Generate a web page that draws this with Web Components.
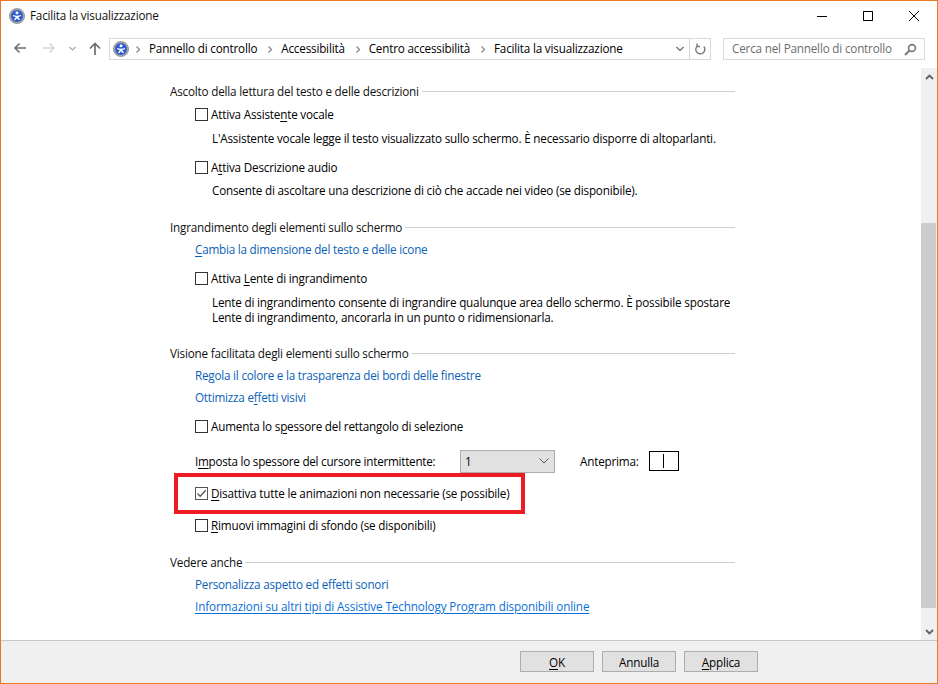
<!DOCTYPE html>
<html lang="it">
<head>
<meta charset="utf-8">
<title>Facilita la visualizzazione</title>
<style>
    html, body { margin: 0; padding: 0; background: #fff; }
    body {
        width: 938px;
        height: 684px;
        overflow: hidden;
        font: 11.7px/16px "Open Sans", "Noto Sans", sans-serif;
        letter-spacing: -0.19px;
        color: #000;
    }
    u { text-underline-offset: 2px; text-decoration-thickness: 1px; }
</style>
</head>
<body>

<cp-window>
    <cp-titlebar slot="title">Facilita la visualizzazione</cp-titlebar>
    <cp-navbar slot="nav">
        <cp-crumb>Pannello di controllo</cp-crumb>
        <cp-crumb>Accessibilità</cp-crumb>
        <cp-crumb>Centro accessibilità</cp-crumb>
        <cp-crumb>Facilita la visualizzazione</cp-crumb>
    </cp-navbar>

    <cp-heading>Ascolto della lettura del testo e delle descrizioni</cp-heading>
    <cp-check gap="7">Attiva Assiste<u>n</u>te vocale</cp-check>
    <cp-note gap="9">L'Assistente vocale legge il testo visualizzato sullo schermo. È necessario disporre di altoparlanti.</cp-note>
    <cp-check gap="13">A<u>t</u>tiva Descrizione audio</cp-check>
    <cp-note gap="8">Consente di ascoltare una descrizione di ciò che accade nei video (se disponibile).</cp-note>

    <cp-heading gap="21">Ingrandimento degli elementi sullo schermo</cp-heading>
    <cp-link gap="6"><u>C</u>ambia la dimensione del testo e delle icone</cp-link>
    <cp-check gap="13">Attiva <u>L</u>ente di ingrandimento</cp-check>
    <cp-note gap="9">Lente di ingrandimento consente di ingrandire qualunque area dello schermo. È possibile spostare<br>Lente di ingrandimento, ancorarla in un punto o ridimensionarla.</cp-note>

    <cp-heading gap="20">Visione facilitata degli elementi sullo schermo</cp-heading>
    <cp-link gap="6">Re<u>g</u>ola il colore e la trasparenza dei bordi delle finestre</cp-link>
    <cp-link gap="6">Ottimizza e<u>f</u>fetti visivi</cp-link>
    <cp-check gap="13">Aumenta lo s<u>p</u>essore del rettangolo di selezione</cp-check>
    <cp-cursor-row gap="19">I<u>m</u>posta lo spessore del cursore intermittente:</cp-cursor-row>
    <cp-check gap="16" checked><u>D</u>isattiva tutte le animazioni non necessarie (se possibile)</cp-check>
    <cp-check gap="16"><u>R</u>imuovi immagini di sfondo (se disponibili)</cp-check>

    <cp-heading gap="21">Vedere anche</cp-heading>
    <cp-link gap="6">Personalizza aspetto ed effetti sonori</cp-link>
    <cp-link gap="6" active>Informazioni su altri tipi di Assistive Technology Program disponibili online</cp-link>

    <cp-highlight slot="overlay"></cp-highlight>

    <cp-button slot="footer"><u>O</u>K</cp-button>
    <cp-button slot="footer">Annulla</cp-button>
    <cp-button slot="footer"><u>A</u>pplica</cp-button>
</cp-window>

<script>
const EASE_ICON = `
    <svg width="16" height="16" viewBox="0 0 16 16" aria-hidden="true">
        <circle cx="8" cy="8" r="7.6" fill="#a4a6ab"/>
        <circle cx="8" cy="8" r="7.6" fill="none" stroke="#77797e" stroke-width="0.6"/>
        <circle cx="8" cy="8" r="5.9" fill="#2c5ad0"/>
        <circle cx="8" cy="4.8" r="1.5" fill="#fff"/>
        <path d="M4 7Q8 8.500 12 7V8Q10 8.800 9.200 9L11 11.800 9.800 12.300 8 10.300 6.200 12.300 5 11.800 6.800 9Q6 8.800 4 8Z" fill="#fff"/>
    </svg>`;

// vertical gap above a row, in pixels, from the gap attribute
function gapOf(el) {
    return el.getAttribute('gap') || '0';
}

class CpWindow extends HTMLElement {
    constructor() {
        super();
        this.attachShadow({ mode: 'open' });
    }

    connectedCallback() {
        this.shadowRoot.innerHTML = `
            <style>
                :host {
                    display: flex;
                    flex-direction: column;
                    box-sizing: border-box;
                    width: 938px;
                    height: 684px;
                    position: relative;
                    background: #fff;
                    border: 1px solid #ec7526;
                }
                .main { flex: 1; display: flex; min-height: 0; }
                .content {
                    flex: 1;
                    padding: 15px 0 0 169px;
                    display: flex;
                    flex-direction: column;
                    align-items: flex-start;
                }
                .footer {
                    box-sizing: border-box;
                    height: 43px;
                    flex-shrink: 0;
                    background: #f0f0f0;
                    border-top: 1px solid #c8c8c8;
                    display: flex;
                    justify-content: flex-end;
                    gap: 8px;
                    padding: 10px 179px 0 0;
                }
            </style>
            <slot name="title"></slot>
            <slot name="nav"></slot>
            <div class="main">
                <div class="content"><slot></slot></div>
                <cp-scrollbar></cp-scrollbar>
            </div>
            <div class="footer"><slot name="footer"></slot></div>
            <slot name="overlay"></slot>
        `;
    }
}

class CpTitlebar extends HTMLElement {
    constructor() {
        super();
        this.attachShadow({ mode: 'open' });
    }

    connectedCallback() {
        this.shadowRoot.innerHTML = `
            <style>
                :host {
                    display: flex;
                    align-items: center;
                    height: 30px;
                    padding-left: 8px;
                    flex-shrink: 0;
                }
                svg { display: block; }
                .text { margin: 0 0 2px 5px; flex: 1; color: #111; }
                .ctl { width: 46px; height: 30px; display: flex; align-items: center; justify-content: center; }
                .ctl svg { margin-top: -1px; }
            </style>
            ${EASE_ICON}
            <span class="text"><slot></slot></span>
            <span class="ctl"><svg width="10" height="10"><path d="M0 5.500h10" stroke="#000"/></svg></span>
            <span class="ctl"><svg width="10" height="10"><rect x=".5" y=".5" width="9" height="9" fill="none" stroke="#000"/></svg></span>
            <span class="ctl"><svg width="10" height="10"><path d="M0 0l10 10M10 0L0 10" stroke="#000" stroke-width="1"/></svg></span>
        `;
    }
}

class CpNavbar extends HTMLElement {
    constructor() {
        super();
        this.attachShadow({ mode: 'open' });
    }

    connectedCallback() {
        this.shadowRoot.innerHTML = `
            <style>
                :host {
                    display: flex;
                    align-items: flex-start;
                    box-sizing: border-box;
                    height: 37px;
                    padding-top: 7px;
                    flex-shrink: 0;
                }
                svg { display: block; flex-shrink: 0; }
                .btns { width: 108px; height: 20px; display: flex; align-items: center; flex-shrink: 0; }
                .address {
                    box-sizing: border-box;
                    width: 602px;
                    height: 22px;
                    border: 1px solid #d9d9d9;
                    display: flex;
                    align-items: center;
                    padding-left: 3px;
                }
                .crumbs { flex: 1; display: flex; align-items: center; margin: 0 0 2px -4px; }
                .refresh {
                    width: 20px;
                    height: 20px;
                    border-left: 1px solid #d9d9d9;
                    display: flex;
                    align-items: center;
                    justify-content: center;
                }
                .drop { margin-right: 5px; }
                .search {
                    box-sizing: border-box;
                    width: 202px;
                    height: 22px;
                    margin-left: 12px;
                    border: 1px solid #d9d9d9;
                    display: flex;
                    align-items: center;
                    justify-content: space-between;
                    padding: 0 7px 0 8px;
                    color: #6d6d6d;
                }
                .search span { margin-bottom: 2px; }
            </style>
            <div class="btns">
                <svg width="14" height="12" style="margin-left:12px"><path d="M13 6H2M6.500 1.500 2 6l4.500 4.500" fill="none" stroke="#6f6f6f" stroke-width="1.600"/></svg>
                <svg width="14" height="12" style="margin-left:15px"><path d="M1 6h11M7.500 1.500 12 6l-4.500 4.500" fill="none" stroke="#d6d6d6" stroke-width="1.600"/></svg>
                <svg width="7" height="5" style="margin-left:13px"><path d="M.5 1 3.500 4l3-3" fill="none" stroke="#a8a8a8" stroke-width="1.200"/></svg>
                <svg width="12" height="13" style="margin-left:13px"><path d="M6 13V2M1 6.500 6 1.500l5 5" fill="none" stroke="#6f6f6f" stroke-width="1.700"/></svg>
            </div>
            <div class="address">
                ${EASE_ICON}
                <div class="crumbs"><slot></slot></div>
                <svg class="drop" width="8" height="6"><path d="M.5 1 4 4.500 7.500 1" fill="none" stroke="#777" stroke-width="1.500"/></svg>
                <div class="refresh">
                    <svg width="11" height="12" viewBox="0 0 11 12"><path d="M3 2.500A4.500 4.500 0 1 0 8.800 3.500M2 .5v3h3" fill="none" stroke="#7a7a7a" stroke-width="1.400"/></svg>
                </div>
            </div>
            <div class="search">
                <span>Cerca nel Pannello di controllo</span>
                <svg width="13" height="13"><circle cx="8" cy="5" r="3.400" fill="none" stroke="#777" stroke-width="1.600"/><path d="M5.500 7.500 1 12" stroke="#777" stroke-width="2"/></svg>
            </div>
        `;
    }
}

class CpCrumb extends HTMLElement {
    constructor() {
        super();
        this.attachShadow({ mode: 'open' });
    }

    connectedCallback() {
        this.shadowRoot.innerHTML = `
            <style>
                :host { display: flex; align-items: center; white-space: nowrap; }
                svg { display: block; margin: 2px 9px 0 11px; }
            </style>
            <svg width="4" height="7"><path d="M.5.5 3.500 3.500.5 6.500" fill="none" stroke="#8a8a8a" stroke-width="1.300"/></svg>
            <span><slot></slot></span>
        `;
    }
}

class CpHeading extends HTMLElement {
    constructor() {
        super();
        this.attachShadow({ mode: 'open' });
    }

    connectedCallback() {
        this.shadowRoot.innerHTML = `
            <style>
                :host {
                    display: flex;
                    align-items: center;
                    width: 565px;
                    height: 16px;
                    margin-top: ${gapOf(this)}px;
                    color: #111;
                }
                .rule { flex: 1; height: 1px; margin-left: 3px; background: #cfcfcf; }
            </style>
            <span><slot></slot></span>
            <div class="rule"></div>
        `;
    }
}

class CpCheck extends HTMLElement {
    constructor() {
        super();
        this.attachShadow({ mode: 'open' });
    }

    connectedCallback() {
        const checked = this.hasAttribute('checked');
        this.shadowRoot.innerHTML = `
            <style>
                :host {
                    display: flex;
                    align-items: center;
                    height: 16px;
                    margin: ${gapOf(this)}px 0 0 25px;
                }
                .box {
                    box-sizing: border-box;
                    width: 13px;
                    height: 13px;
                    margin-right: 3px;
                    border: 1px solid ${checked ? '#555' : '#333'};
                    background: #fff;
                    display: block;
                }
                svg { display: block; }
            </style>
            <span class="box">${checked ? '<svg width="11" height="11"><path d="M1.500 5.500 4.200 8.200 9.700 2.300" fill="none" stroke="#555" stroke-width="1.300"/></svg>' : ''}</span>
            <span><slot></slot></span>
        `;
    }
}

class CpNote extends HTMLElement {
    constructor() {
        super();
        this.attachShadow({ mode: 'open' });
    }

    connectedCallback() {
        this.shadowRoot.innerHTML = `
            <style>
                :host {
                    display: block;
                    margin: ${gapOf(this)}px 0 0 42px;
                    line-height: 15px;
                    white-space: nowrap;
                }
            </style>
            <slot></slot>
        `;
    }
}

class CpLink extends HTMLElement {
    constructor() {
        super();
        this.attachShadow({ mode: 'open' });
    }

    connectedCallback() {
        const active = this.hasAttribute('active');
        this.shadowRoot.innerHTML = `
            <style>
                :host {
                    display: block;
                    height: 16px;
                    margin: ${gapOf(this)}px 0 0 25px;
                    color: ${active ? '#0a6fd8' : '#0a62b8'};
                    letter-spacing: ${active ? '-0.12px' : '-0.22px'};
                    ${active ? 'text-decoration: underline; text-underline-offset: 2px;' : ''}
                }
            </style>
            <slot></slot>
        `;
    }
}

class CpCursorRow extends HTMLElement {
    constructor() {
        super();
        this.attachShadow({ mode: 'open' });
    }

    connectedCallback() {
        this.shadowRoot.innerHTML = `
            <style>
                :host {
                    display: flex;
                    align-items: center;
                    height: 16px;
                    margin: ${gapOf(this)}px 0 0 25px;
                }
                .lead { width: 265px; letter-spacing: -0.25px; }
                .combo {
                    box-sizing: border-box;
                    width: 95px;
                    height: 23px;
                    background: #e1e1e1;
                    border: 1px solid #adadad;
                    display: flex;
                    align-items: center;
                    justify-content: space-between;
                    padding: 0 5px 0 4px;
                }
                .label { margin-left: 25px; width: 69px; }
                .preview {
                    box-sizing: border-box;
                    width: 30px;
                    height: 20px;
                    border: 1px solid #000;
                    display: flex;
                    align-items: center;
                    padding-left: 13px;
                }
                .caret { width: 1px; height: 14px; background: #000; }
                svg { display: block; }
            </style>
            <div class="lead"><slot></slot></div>
            <div class="combo">
                <span>1</span>
                <svg width="10" height="6"><path d="M.5.5 5 5 9.500.5" fill="none" stroke="#555"/></svg>
            </div>
            <span class="label">Anteprima:</span>
            <div class="preview"><div class="caret"></div></div>
        `;
    }
}

class CpScrollbar extends HTMLElement {
    constructor() {
        super();
        this.attachShadow({ mode: 'open' });
    }

    connectedCallback() {
        this.shadowRoot.innerHTML = `
            <style>
                :host {
                    display: flex;
                    flex-direction: column;
                    width: 16px;
                    background: #f0f0f0;
                    flex-shrink: 0;
                }
                .arrow { height: 17px; display: flex; align-items: center; justify-content: center; }
                .track { flex: 1; padding: 138px 1px 15px 0; display: flex; }
                .thumb { flex: 1; background: #cdcdcd; }
                svg { display: block; }
            </style>
            <div class="arrow"><svg width="9" height="6"><path d="M1 5 4.500 1.500 8 5" fill="none" stroke="#606060" stroke-width="1.800"/></svg></div>
            <div class="track"><div class="thumb"></div></div>
            <div class="arrow"><svg width="9" height="6"><path d="M1 1 4.500 4.500 8 1" fill="none" stroke="#606060" stroke-width="1.800"/></svg></div>
        `;
    }
}

class CpButton extends HTMLElement {
    constructor() {
        super();
        this.attachShadow({ mode: 'open' });
    }

    connectedCallback() {
        this.shadowRoot.innerHTML = `
            <style>
                :host {
                    display: flex;
                    align-items: center;
                    justify-content: center;
                    box-sizing: border-box;
                    width: 74px;
                    height: 21px;
                    background: #e1e1e1;
                    border: 1px solid #adadad;
                }
            </style>
            <span><slot></slot></span>
        `;
    }
}

// red annotation drawn on top of the screenshot
class CpHighlight extends HTMLElement {
    constructor() {
        super();
        this.attachShadow({ mode: 'open' });
    }

    connectedCallback() {
        this.shadowRoot.innerHTML = `
            <style>
                :host {
                    position: absolute;
                    left: 173px;
                    top: 472px;
                    width: 351px;
                    height: 41px;
                    box-sizing: border-box;
                    border: 4px solid #ed1c24;
                    display: block;
                }
            </style>
        `;
    }
}

customElements.define('cp-titlebar', CpTitlebar);
customElements.define('cp-navbar', CpNavbar);
customElements.define('cp-crumb', CpCrumb);
customElements.define('cp-heading', CpHeading);
customElements.define('cp-check', CpCheck);
customElements.define('cp-note', CpNote);
customElements.define('cp-link', CpLink);
customElements.define('cp-cursor-row', CpCursorRow);
customElements.define('cp-scrollbar', CpScrollbar);
customElements.define('cp-button', CpButton);
customElements.define('cp-highlight', CpHighlight);
customElements.define('cp-window', CpWindow);
</script>
</body>
</html>
